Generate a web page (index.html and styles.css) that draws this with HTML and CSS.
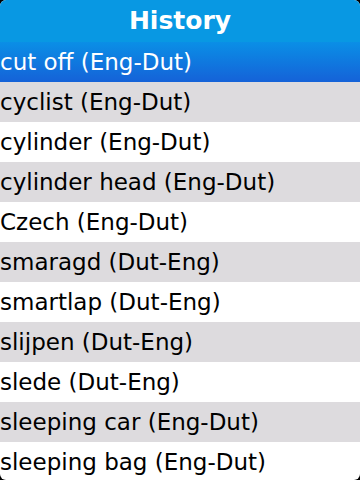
FILE: index.html
```html
<!DOCTYPE html>
<html lang="en">
<head>
  <meta charset="UTF-8">
  <meta name="viewport" content="width=device-width, initial-scale=1.0">
  <title>History</title>
  <link rel="stylesheet" href="styles.css">
</head>
<body>
  <div class="screen">
    <div class="title-bar">History</div>
    <ul class="history-list">
      <li class="selected">cut off (Eng-Dut)</li>
      <li>cyclist (Eng-Dut)</li>
      <li>cylinder (Eng-Dut)</li>
      <li>cylinder head (Eng-Dut)</li>
      <li>Czech (Eng-Dut)</li>
      <li>smaragd (Dut-Eng)</li>
      <li>smartlap (Dut-Eng)</li>
      <li>slijpen (Dut-Eng)</li>
      <li>slede (Dut-Eng)</li>
      <li>sleeping car (Eng-Dut)</li>
      <li>sleeping bag (Eng-Dut)</li>
    </ul>
  </div>
</body>
</html>
```

FILE: styles.css
```css
html, body {
    margin: 0;
    padding: 0;
    background: #000;
}
.screen {
    width: 360px;
    height: 480px;
    overflow: hidden;
    background: #fff;
    border-radius: 6px;
    font-family: "DejaVu Sans", sans-serif;
}
.title-bar {
    height: 42px;
    line-height: 42px;
    background: #0898e3;
    color: #fff;
    font-size: 25px;
    font-weight: bold;
    text-align: center;
}
.history-list {
    list-style: none;
    margin: 0;
    padding: 0;
}
.history-list li {
    height: 40px;
    line-height: 40px;
    padding-left: 0;
    font-size: 23px;
    color: #000;
    white-space: nowrap;
}
.history-list li:nth-child(even) {
    background: #dddbde;
}
.history-list li.selected {
    background: linear-gradient(#0a8fe6, #1562d8);
    color: #fff;
}
```
